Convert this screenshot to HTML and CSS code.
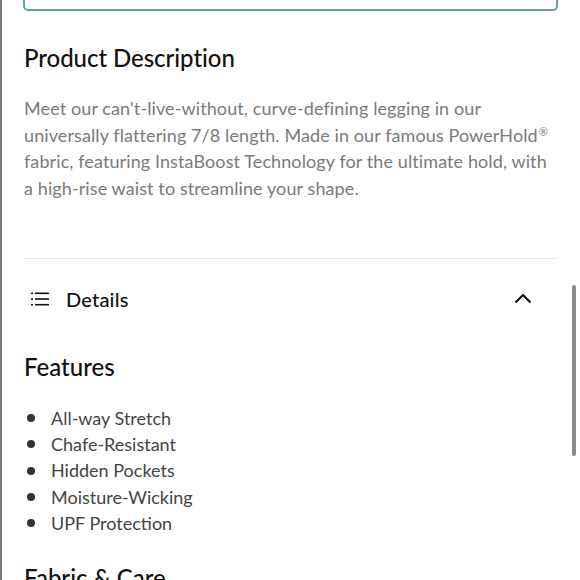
FILE: index.html
```html
<!DOCTYPE html>
<html>
<head>
<meta charset="utf-8">
<link rel="stylesheet" href="styles.css">
</head>
<body>
<div class="frame">
  <div class="page">
    <div class="top-box"></div>
    <section class="desc">
      <h2 class="title">Product Description</h2>
      <p class="desc-text">Meet our can't-live-without, curve-defining legging in our universally flattering 7/8 length. Made in our famous PowerHold<span class="reg">®</span> fabric, featuring InstaBoost Technology for the ultimate hold, with a high-rise waist to streamline your shape.</p>
    </section>
    <hr class="divider">
    <div class="acc-head">
      <svg class="list-icon" width="18" height="14" viewBox="0 0 18 14">
        <g fill="#111">
          <rect x="0" y="0.5" width="2" height="1.6"/>
          <rect x="4" y="0.5" width="14" height="1.6"/>
          <rect x="0" y="6.2" width="2" height="1.6"/>
          <rect x="4" y="6.2" width="14" height="1.6"/>
          <rect x="0" y="11.9" width="2" height="1.6"/>
          <rect x="4" y="11.9" width="14" height="1.6"/>
        </g>
      </svg>
      <span class="acc-title">Details</span>
      <svg class="chev" width="18" height="11" viewBox="0 0 18 11">
        <path d="M1.5 9.5 L9 2 L16.5 9.5" fill="none" stroke="#111" stroke-width="2.2"/>
      </svg>
    </div>
    <h3 class="sub">Features</h3>
    <ul class="feat">
      <li>All-way Stretch</li>
      <li>Chafe-Resistant</li>
      <li>Hidden Pockets</li>
      <li>Moisture-Wicking</li>
      <li>UPF Protection</li>
    </ul>
    <h3 class="sub sub2">Fabric &amp; Care</h3>
  </div>
  <div class="scroll-thumb"></div>
</div>
</body>
</html>
```

FILE: styles.css
```css
html, body {
  margin: 0;
  padding: 0;
  background: #fff;
  overflow: hidden;
}
body {
  font-family: "Lato", "Open Sans", sans-serif;
  color: #111;
}
.frame {
  width: 580px;
  height: 580px;
  position: relative;
  border-left: 2px solid #7a7a7a;
  box-sizing: border-box;
  overflow: hidden;
}
.page {
  padding: 0 22px 0 21px;
}
.top-box {
  margin-top: -29px;
  height: 40px;
  border: 2px solid #5fa2ac;
  border-radius: 5px;
  box-sizing: border-box;
}
.title {
  margin: 32px 0 0 1px;
  font-size: 24px;
  font-weight: 500;
  line-height: 30px;
  letter-spacing: -0.05px;
}
.desc-text {
  margin: 22px 0 0 1px;
  width: 536px;
  font-size: 18px;
  line-height: 26.7px;
  color: #7a7a7a;
  letter-spacing: 0.1px;
}
.reg {
  font-size: 11px;
  vertical-align: 6px;
  line-height: 0;
  margin-left: 1px;
}
.divider {
  margin: 56px 0 0 0;
  border: 0;
  border-top: 1px solid #e9e9e9;
}
.acc-head {
  display: flex;
  align-items: center;
  height: 80px;
  padding: 0 26px 0 8px;
}
.list-icon {
  flex: none;
}
.acc-title {
  margin-left: 17px;
  font-size: 20px;
  font-weight: 500;
  letter-spacing: 0.2px;
  flex: 1;
}
.chev {
  flex: none;
}
.sub {
  margin: 13px 0 0 1px;
  font-size: 24px;
  font-weight: 500;
  line-height: 30px;
}
.feat {
  list-style: none;
  margin: 23px 0 0 0;
  padding: 0;
}
.feat li {
  display: flex;
  align-items: center;
  font-size: 18px;
  line-height: 26.3px;
  color: #444;
}
.feat li::before {
  content: "";
  width: 8px;
  height: 8px;
  border-radius: 50%;
  background: #333;
  margin: 0 16px 0 4px;
  flex: none;
}
.sub2 {
  margin-top: 27px;
}
.scroll-thumb {
  position: absolute;
  right: 4px;
  top: 285px;
  width: 4px;
  height: 171px;
  border-radius: 2px;
  background: #8a8a8a;
}
```
